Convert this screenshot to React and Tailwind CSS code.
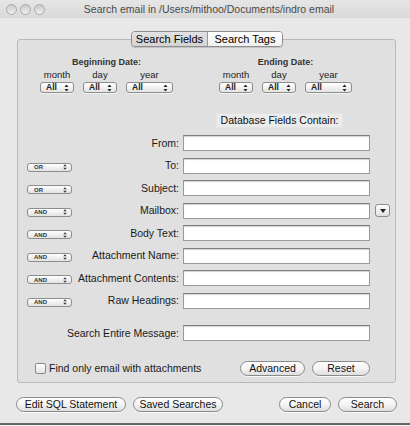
import React from "react";

const font = { fontFamily: '"Liberation Sans", Arial, sans-serif' };

function Arrows() {
  // tiny up/down popup arrows
  return (
    <svg width="5" height="8" viewBox="0 0 5 8" className="shrink-0">
      <path d="M2.5 0.5 L4.5 3 L0.5 3 Z" fill="#222" />
      <path d="M0.5 5 L4.5 5 L2.5 7.5 Z" fill="#222" />
    </svg>
  );
}

function Popup({ label, w }) {
  return (
    <div
      className="h-[11px] rounded-[3px] border border-[#8d8d8d] bg-gradient-to-b from-white to-[#e4e4e4] flex items-center justify-between pl-[5px] pr-[4px] shadow-[0_1px_0_rgba(255,255,255,0.6)]"
      style={{ width: w }}
    >
      <span className="text-[8.5px] leading-none font-bold text-[#222]">{label}</span>
      <Arrows />
    </div>
  );
}

function MiniPopup({ label }) {
  return (
    <div className="w-[45px] h-[9px] rounded-[3px] border border-[#8d8d8d] bg-gradient-to-b from-white to-[#e2e2e2] flex items-center justify-between pl-[6px] pr-[4px]">
      <span className="text-[6px] leading-none font-bold text-[#333]">{label}</span>
      <svg width="4" height="6" viewBox="0 0 4 6">
        <path d="M2 0.3 L3.7 2.3 L0.3 2.3 Z" fill="#333" />
        <path d="M0.3 3.7 L3.7 3.7 L2 5.7 Z" fill="#333" />
      </svg>
    </div>
  );
}

function DateGroup({ title, className }) {
  const cols = [
    { l: "month", w: 34 },
    { l: "day", w: 34 },
    { l: "year", w: 47 },
  ];
  return (
    <div className={"flex flex-col items-center " + className}>
      <div className="text-[9px] leading-[12px] font-bold text-[#333]">{title}</div>
      <div className="flex gap-[9px] mt-[2px]">
        {cols.map((c) => (
          <div key={c.l} className="flex flex-col items-center">
            <div className="text-[9.5px] leading-[10px] text-[#222]">{c.l}</div>
            <div className="mt-[2px]">
              <Popup label="All" w={c.w} />
            </div>
          </div>
        ))}
      </div>
    </div>
  );
}

function Field({ op, label, extra }) {
  return (
    <div className="flex items-center h-[16px]">
      <div className="w-[54px] pl-[9px] flex items-center pt-[3px]">
        {op && <MiniPopup label={op} />}
      </div>
      <div className="w-[107px] flex justify-end whitespace-nowrap text-[10.5px] leading-none text-[#1a1a1a]">
        {label}
      </div>
      <div className="ml-[4px] w-[187px] h-[16px] bg-white border border-[#9a9a9a] border-t-[#7e7e7e] shadow-[inset_0_1px_1px_rgba(0,0,0,0.18)]" />
      {extra && (
        <div className="ml-[5px] w-[15px] h-[13px] rounded-[3px] border border-[#8d8d8d] bg-gradient-to-b from-white to-[#e0e0e0] flex items-center justify-center">
          <svg width="6" height="4" viewBox="0 0 6 4">
            <path d="M0 0 L6 0 L3 4 Z" fill="#222" />
          </svg>
        </div>
      )}
    </div>
  );
}

function PillButton({ children, w }) {
  return (
    <button
      className="h-[15px] rounded-full border border-[#8a8a8a] bg-gradient-to-b from-white via-[#f4f4f4] to-[#dedede] text-[10.5px] leading-none text-[#111] flex items-center justify-center shadow-[0_1px_0_rgba(255,255,255,0.7)]"
      style={{ width: w }}
    >
      {children}
    </button>
  );
}

export default function App() {
  const fields = [
    { op: null, label: "From:" },
    { op: "OR", label: "To:" },
    { op: "OR", label: "Subject:" },
    { op: "AND", label: "Mailbox:", extra: true },
    { op: "AND", label: "Body Text:" },
    { op: "AND", label: "Attachment Name:" },
    { op: "AND", label: "Attachment Contents:" },
    { op: "AND", label: "Raw Headings:" },
  ];

  return (
    <div className="w-[410px] h-[426px] bg-[#e8e8e8] flex flex-col overflow-hidden" style={font}>
      {/* title bar */}
      <div className="h-[18px] shrink-0 bg-gradient-to-b from-[#e6e6e6] to-[#d9d9d9] flex items-center relative">
        <div className="flex gap-[3px] pl-[6px]">
          {[0, 1, 2].map((i) => (
            <div
              key={i}
              className="w-[11px] h-[11px] rounded-full border border-[#a9a9a9] bg-gradient-to-b from-[#c9c9c9] to-[#f0f0f0]"
            />
          ))}
        </div>
        <div className="flex-1 text-center text-[10.5px] leading-none text-[#4a4a4a] pr-[40px] pl-[3px]">
          Search email in /Users/mithoo/Documents/indro email
        </div>
      </div>

      {/* tabs */}
      <div className="mt-[13px] flex justify-center relative z-10 -mb-[8px] pl-[4px]">
        <div className="flex h-[16px] rounded-[4px] border border-[#8e8e8e] overflow-hidden shadow-[0_1px_1px_rgba(0,0,0,0.15)]">
          <div className="w-[76px] bg-gradient-to-b from-[#e2e2e2] to-[#d4d4d4] border-r border-[#9a9a9a] flex items-center justify-center text-[11px] leading-none text-[#000]">
            Search Fields
          </div>
          <div className="w-[74px] bg-gradient-to-b from-white to-[#f0f0f0] flex items-center justify-center text-[11px] leading-none text-[#000]">
            Search Tags
          </div>
        </div>
      </div>

      {/* panel */}
      <div className="ml-[17px] w-[379px] h-[344px] shrink-0 rounded-[3px] border border-[#b9b9b9] bg-[#e0e0e0] flex flex-col">
        <div className="flex pt-[16px]">
          <DateGroup title="Beginning Date:" className="ml-[22px]" />
          <DateGroup title="Ending Date:" className="ml-[46px]" />
        </div>

        <div className="mt-[20px] ml-[198px] w-[127px] h-[15px] bg-[#ebebeb] border border-[#e4e4e4] flex items-center justify-center text-[10.5px] leading-none text-[#111]">
          Database Fields Contain:
        </div>

        <div className="mt-[7px] flex flex-col gap-[6.5px]">
          {fields.map((f) => (
            <Field key={f.label} {...f} />
          ))}
        </div>

        <div className="mt-[16.5px]">
          <Field op={null} label="Search Entire Message:" />
        </div>

        <div className="mt-[20px] flex items-center h-[15px]">
          <div className="ml-[17px] w-[11px] h-[11px] rounded-[2px] border border-[#8a8a8a] bg-gradient-to-b from-white to-[#e4e4e4]" />
          <span className="ml-[3px] text-[10.5px] leading-none text-[#1a1a1a]">Find only email with attachments</span>
          <div className="ml-auto mr-[25px] flex gap-[7px]">
            <PillButton w={65}>Advanced</PillButton>
            <PillButton w={58}>Reset</PillButton>
          </div>
        </div>
      </div>

      {/* bottom buttons */}
      <div className="mt-[14px] flex items-center h-[15px]">
        <div className="ml-[16px] flex gap-[7px]">
          <PillButton w={110}>Edit SQL Statement</PillButton>
          <PillButton w={90}>Saved Searches</PillButton>
        </div>
        <div className="ml-auto mr-[13px] flex gap-[7px]">
          <PillButton w={52}>Cancel</PillButton>
          <PillButton w={59}>Search</PillButton>
        </div>
      </div>

      <div className="mt-[11px] h-[2px] bg-[#666666]" />
      <div className="flex-1 bg-[#f2f2f2]" />
    </div>
  );
}
